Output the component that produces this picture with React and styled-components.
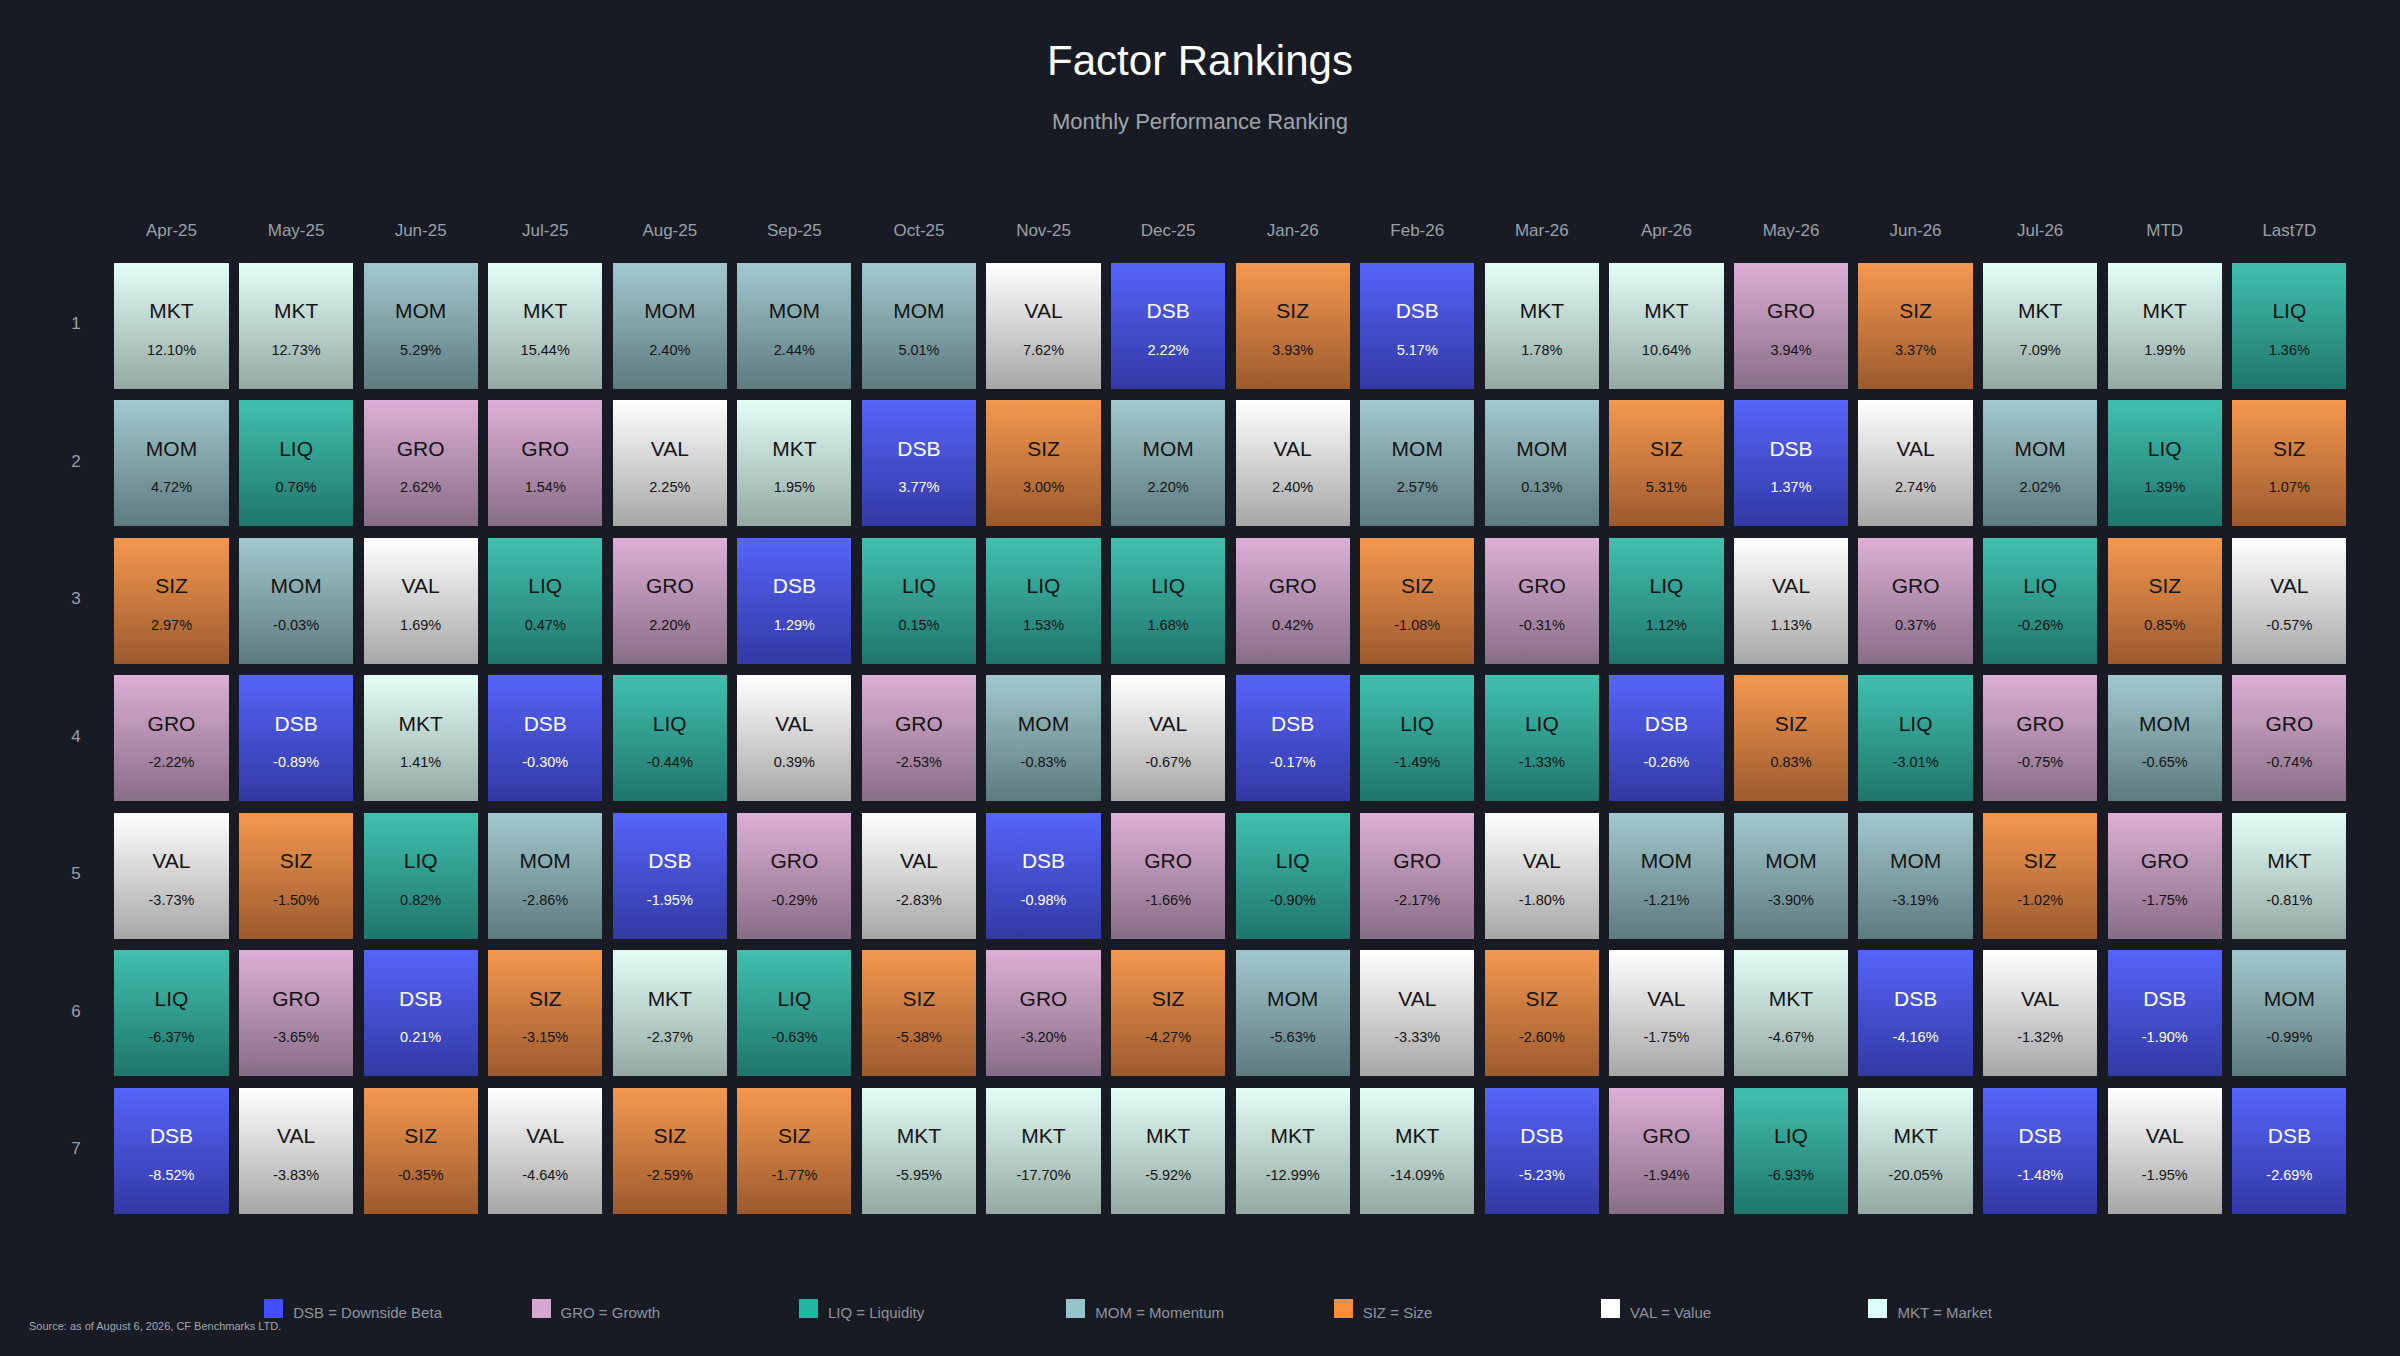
import React from "react";
import styled, { createGlobalStyle } from "styled-components";

const GlobalStyle = createGlobalStyle`
  html, body {
    margin: 0;
    padding: 0;
    background: #181b24;
  }
  body {
    font-family: "Liberation Sans", Arial, sans-serif;
  }
`;

const FACTORS = {
  DSB: { top: "#5664fa", bottom: "#3239a3", fg: "#ffffff", swatch: "#4350ff", name: "Downside Beta" },
  GRO: { top: "#ddafd6", bottom: "#876d86", fg: "#141414", swatch: "#d8a7d0", name: "Growth" },
  LIQ: { top: "#41c0ae", bottom: "#1f756b", fg: "#141414", swatch: "#22b5a0", name: "Liquidity" },
  MOM: { top: "#a2c8cd", bottom: "#5d7a7f", fg: "#141414", swatch: "#96c4cb", name: "Momentum" },
  SIZ: { top: "#f4984f", bottom: "#9c5a2e", fg: "#141414", swatch: "#f98f3b", name: "Size" },
  VAL: { top: "#ffffff", bottom: "#a6a6a6", fg: "#141414", swatch: "#ffffff", name: "Value" },
  MKT: { top: "#e3fdf7", bottom: "#93a8a3", fg: "#141414", swatch: "#dcfff7", name: "Market" },
};

const LEGEND_ORDER = ["DSB", "GRO", "LIQ", "MOM", "SIZ", "VAL", "MKT"];

const COLUMNS = [
  "Apr-25", "May-25", "Jun-25", "Jul-25", "Aug-25", "Sep-25", "Oct-25", "Nov-25", "Dec-25",
  "Jan-26", "Feb-26", "Mar-26", "Apr-26", "May-26", "Jun-26", "Jul-26", "MTD", "Last7D",
];

// each row: "FACTOR value" per column
const RANKS = [
  "MKT 12.10|MKT 12.73|MOM 5.29|MKT 15.44|MOM 2.40|MOM 2.44|MOM 5.01|VAL 7.62|DSB 2.22|SIZ 3.93|DSB 5.17|MKT 1.78|MKT 10.64|GRO 3.94|SIZ 3.37|MKT 7.09|MKT 1.99|LIQ 1.36",
  "MOM 4.72|LIQ 0.76|GRO 2.62|GRO 1.54|VAL 2.25|MKT 1.95|DSB 3.77|SIZ 3.00|MOM 2.20|VAL 2.40|MOM 2.57|MOM 0.13|SIZ 5.31|DSB 1.37|VAL 2.74|MOM 2.02|LIQ 1.39|SIZ 1.07",
  "SIZ 2.97|MOM -0.03|VAL 1.69|LIQ 0.47|GRO 2.20|DSB 1.29|LIQ 0.15|LIQ 1.53|LIQ 1.68|GRO 0.42|SIZ -1.08|GRO -0.31|LIQ 1.12|VAL 1.13|GRO 0.37|LIQ -0.26|SIZ 0.85|VAL -0.57",
  "GRO -2.22|DSB -0.89|MKT 1.41|DSB -0.30|LIQ -0.44|VAL 0.39|GRO -2.53|MOM -0.83|VAL -0.67|DSB -0.17|LIQ -1.49|LIQ -1.33|DSB -0.26|SIZ 0.83|LIQ -3.01|GRO -0.75|MOM -0.65|GRO -0.74",
  "VAL -3.73|SIZ -1.50|LIQ 0.82|MOM -2.86|DSB -1.95|GRO -0.29|VAL -2.83|DSB -0.98|GRO -1.66|LIQ -0.90|GRO -2.17|VAL -1.80|MOM -1.21|MOM -3.90|MOM -3.19|SIZ -1.02|GRO -1.75|MKT -0.81",
  "LIQ -6.37|GRO -3.65|DSB 0.21|SIZ -3.15|MKT -2.37|LIQ -0.63|SIZ -5.38|GRO -3.20|SIZ -4.27|MOM -5.63|VAL -3.33|SIZ -2.60|VAL -1.75|MKT -4.67|DSB -4.16|VAL -1.32|DSB -1.90|MOM -0.99",
  "DSB -8.52|VAL -3.83|SIZ -0.35|VAL -4.64|SIZ -2.59|SIZ -1.77|MKT -5.95|MKT -17.70|MKT -5.92|MKT -12.99|MKT -14.09|DSB -5.23|GRO -1.94|LIQ -6.93|MKT -20.05|DSB -1.48|VAL -1.95|DSB -2.69",
].map((row) =>
  row.split("|").map((cell) => {
    const [factor, value] = cell.split(" ");
    return { factor, value };
  })
);

const Page = styled.div`
  width: 2400px;
  height: 1356px;
  background: #181b24;
  overflow: hidden;
  display: flex;
  flex-direction: column;
`;

const Header = styled.header`
  display: flex;
  flex-direction: column;
  align-items: center;
  padding-top: 39.5px;
`;

const Title = styled.h1`
  margin: 0;
  font-size: 42px;
  line-height: 42px;
  font-weight: 400;
  color: #ffffff;
`;

const Subtitle = styled.div`
  margin-top: 29.2px;
  font-size: 22px;
  line-height: 22px;
  color: #a0a4ab;
`;

const Grid = styled.div`
  margin: 89.6px 0 0 48px;
  display: grid;
  grid-template-columns: 56px repeat(18, 114.2px);
  grid-template-rows: auto repeat(7, 126px);
  column-gap: 10.4px;
  row-gap: 11.5px;
`;

const ColHead = styled.div`
  height: 17px;
  margin-bottom: 12.2px;
  font-size: 17px;
  line-height: 17px;
  text-align: center;
  color: #9aa0a9;
  white-space: nowrap;
`;

const Corner = styled.div`
  height: 17px;
`;

const RowLabel = styled.div`
  display: flex;
  align-items: center;
  justify-content: center;
  padding-bottom: 3px;
  font-size: 17px;
  color: #9aa0a9;
`;

const Tile = styled.div`
  display: flex;
  flex-direction: column;
  align-items: center;
  justify-content: center;
  padding-top: 5.7px;
  box-sizing: border-box;
  background: linear-gradient(
    180deg,
    ${({ $factor }) => FACTORS[$factor].top} 0%,
    ${({ $factor }) => FACTORS[$factor].bottom} 100%
  );
  color: ${({ $factor }) => FACTORS[$factor].fg};
`;

const TileName = styled.div`
  font-size: 21px;
  line-height: 21px;
`;

const TileValue = styled.div`
  margin-top: 21.8px;
  font-size: 14.5px;
  line-height: 14.5px;
`;

const Footer = styled.footer`
  margin-top: 85px;
  display: flex;
  flex-direction: column;
`;

const Legend = styled.div`
  display: flex;
  justify-content: center;
`;

const LegendItem = styled.div`
  width: 267.4px;
  display: flex;
  align-items: flex-start;
  gap: 10px;
`;

const Swatch = styled.span`
  width: 19px;
  height: 19px;
  flex: none;
  background: ${({ $color }) => $color};
`;

const LegendText = styled.span`
  padding-top: 3.6px;
  font-size: 15px;
  line-height: 19px;
  color: #8f949c;
  white-space: nowrap;
`;

const Source = styled.div`
  margin-top: -1px;
  padding-left: 29px;
  font-size: 11px;
  line-height: 11px;
  color: #a3a7ae;
`;

export default function App() {
  return (
    <>
      <GlobalStyle />
      <Page>
        <Header>
          <Title>Factor Rankings</Title>
          <Subtitle>Monthly Performance Ranking</Subtitle>
        </Header>

        <Grid>
          <Corner />
          {COLUMNS.map((col) => (
            <ColHead key={col}>{col}</ColHead>
          ))}
          {RANKS.map((row, i) => (
            <React.Fragment key={i}>
              <RowLabel>{i + 1}</RowLabel>
              {row.map((cell, j) => (
                <Tile key={j} $factor={cell.factor}>
                  <TileName>{cell.factor}</TileName>
                  <TileValue>{cell.value}%</TileValue>
                </Tile>
              ))}
            </React.Fragment>
          ))}
        </Grid>

        <Footer>
          <Legend>
            {LEGEND_ORDER.map((key) => (
              <LegendItem key={key}>
                <Swatch $color={FACTORS[key].swatch} />
                <LegendText>
                  {key} = {FACTORS[key].name}
                </LegendText>
              </LegendItem>
            ))}
          </Legend>
          <Source>Source: as of August 6, 2026, CF Benchmarks LTD.</Source>
        </Footer>
      </Page>
    </>
  );
}
